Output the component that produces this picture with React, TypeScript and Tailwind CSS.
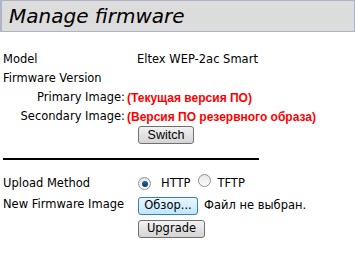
const body = { fontFamily: '"DejaVu Sans", Verdana, sans-serif' };
const red = { fontFamily: '"Liberation Sans", Arial, sans-serif' };

function Radio({ checked }: { checked?: boolean }) {
  return (
    <span className="inline-flex h-[13px] w-[13px] items-center justify-center rounded-full border border-[#8e8f8f] bg-gradient-to-b from-[#e6e6e6] to-[#fdfdfd]">
      {checked && <span className="h-[6px] w-[6px] rounded-full bg-gradient-to-b from-[#1b6aa8] to-[#0a3a63]" />}
    </span>
  );
}

function Btn({ children, focus, className = '' }: { children: React.ReactNode; focus?: boolean; className?: string }) {
  return (
    <button
      className={
        'h-[18px] rounded-[3px] border text-[11.5px] leading-none text-black ' +
        (focus
          ? 'border-[#3c7fb1] bg-gradient-to-b from-[#eaf6fd] to-[#bee6fd] '
          : 'border-[#707070] bg-gradient-to-b from-[#f2f2f2] to-[#d4d4d4] ') +
        className
      }
      style={body}
    >
      {children}
    </button>
  );
}

export default function App() {
  return (
    <div className="h-[258px] w-[355px] overflow-hidden bg-white text-[11.5px] text-black" style={body}>
      <div className="flex h-[32px] items-center border border-[#aeb3c6] border-l-2 bg-[#dcdcdc] pl-[7px]">
        <h1 className="text-[20px] italic leading-none" style={body}>
          Manage firmware
        </h1>
      </div>

      <div className="pl-[3px] pt-[18px]">
        <div className="flex h-[19px] items-center">
          <span className="w-[134px]">Model</span>
          <span>Eltex WEP-2ac Smart</span>
        </div>
        <div className="flex h-[19px] items-center">Firmware Version</div>
        <div className="flex h-[19px] items-center">
          <span className="w-[122px] text-right">Primary Image:</span>
          <span className="ml-[2px] text-[12px] font-bold text-[#ff0000]" style={red}>
            (Текущая версия ПО)
          </span>
        </div>
        <div className="flex h-[19px] items-center">
          <span className="w-[122px] text-right">Secondary Image:</span>
          <span className="ml-[2px] text-[12px] font-bold text-[#ff0000]" style={red}>
            (Версия ПО резервного образа)
          </span>
        </div>
        <div className="flex pl-[135px]">
          <Btn className="w-[56px]">
            <span style={red} className="text-[12.5px]">Switch</span>
          </Btn>
        </div>
        <div className="mt-[14px] h-[2px] w-[256px] bg-black" />

        <div className="mt-[14px] flex h-[19px] items-center">
          <span className="w-[135px]">Upload Method</span>
          <Radio checked />
          <span className="ml-[10px]">HTTP</span>
          <span className="ml-[8px]">
            <Radio />
          </span>
          <span className="ml-[6px]">TFTP</span>
        </div>
        <div className="mt-[4px] flex items-start">
          <span className="w-[135px] leading-[14px]">New Firmware Image</span>
          <div className="flex flex-col gap-[5px]">
            <div className="flex items-center">
              <Btn focus className="w-[60px]">Обзор...</Btn>
              <span className="ml-[6px]">Файл не выбран.</span>
            </div>
            <Btn className="w-[67px]">Upgrade</Btn>
          </div>
        </div>
      </div>
    </div>
  );
}
